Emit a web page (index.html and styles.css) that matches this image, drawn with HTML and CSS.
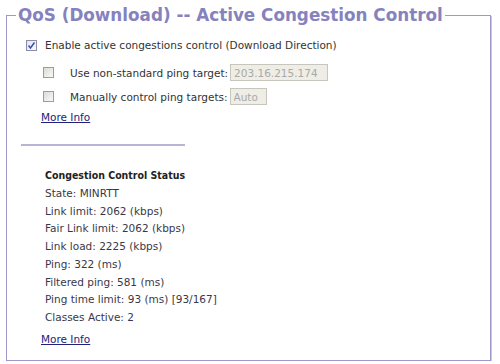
FILE: index.html
```html
<!DOCTYPE html>
<html lang="en">
<head>
  <meta charset="UTF-8">
  <title>QoS (Download)</title>
  <link rel="stylesheet" href="styles.css">
</head>
<body>
  <fieldset class="panel">
    <legend>QoS (Download) -- Active Congestion Control</legend>

    <div class="opt main">
      <span class="cb checked">
        <svg width="9" height="9" viewBox="0 0 9 9"><polyline points="1.5,4.5 3.5,7 7.5,1.5" fill="none" stroke="#3d52b8" stroke-width="1.6"/></svg>
      </span>
      <span>Enable active congestions control (Download Direction)</span>
    </div>

    <div class="opt sub first">
      <span class="cb"></span>
      <span class="lbl">Use non-standard ping target:</span>
      <input class="field ip" type="text" value="203.16.215.174" disabled>
    </div>
    <div class="opt sub">
      <span class="cb"></span>
      <span class="lbl">Manually control ping targets:</span>
      <input class="field auto" type="text" value="Auto" disabled>
    </div>

    <a class="more" href="#">More Info</a>

    <hr class="divider">

    <div class="status">
      <div class="status-title">Congestion Control Status</div>
      <div>State: MINRTT</div>
      <div>Link limit: 2062 (kbps)</div>
      <div>Fair Link limit: 2062 (kbps)</div>
      <div>Link load: 2225 (kbps)</div>
      <div>Ping: 322 (ms)</div>
      <div>Filtered ping: 581 (ms)</div>
      <div>Ping time limit: 93 (ms) [93/167]</div>
      <div>Classes Active: 2</div>
    </div>

    <a class="more last" href="#">More Info</a>
  </fieldset>
</body>
</html>
```

FILE: styles.css
```css
body {
  margin: 0;
  background: #fff;
  font-family: "DejaVu Sans", Verdana, sans-serif;
  font-size: 10.5px;
  color: #333;
}

.panel {
  width: 485px;
  margin: 5px 0 0 6px;
  padding: 10px 0 14px 14px;
  border: 1px solid #9c98cc;
  box-shadow: 1px 1px 0 #cbc8e2;
  box-sizing: border-box;
}

.panel legend {
  margin-left: -5px;
  padding: 0 2px;
  font-size: 16.8px;
  font-weight: bold;
  line-height: 21px;
  color: #8582be;
}

.opt {
  display: flex;
  align-items: center;
}

.opt.main {
  height: 18px;
  padding-left: 5px;
}

.opt.sub {
  height: 19px;
  padding-left: 22px;
  margin-top: 5px;
}

.opt.sub.first {
  margin-top: 9px;
}

.cb {
  display: inline-flex;
  align-items: center;
  justify-content: center;
  width: 11px;
  height: 11px;
  border: 1px solid #9c9c9c;
  background: linear-gradient(135deg, #dcdcd6, #f8f8f6);
  box-sizing: border-box;
  margin-right: 8px;
}

.cb.checked {
  border-color: #8c8ca8;
  background: linear-gradient(135deg, #e4e4ec, #fafafc);
}

.opt.sub .cb {
  margin-right: 16px;
}

.lbl {
  margin-right: 2px;
}

.field {
  height: 17px;
  padding: 0 3px;
  border: 1px solid #c6c6bc;
  background: #efeee6;
  color: #a9a9a9;
  font-family: inherit;
  font-size: 10.5px;
  box-sizing: border-box;
}

.field.ip {
  width: 98px;
}

.field.auto {
  width: 37px;
}

.more {
  display: block;
  width: max-content;
  margin: 4px 0 0 20px;
  line-height: 14px;
  color: #22227a;
}

.more.last {
  margin-top: 5px;
}

.divider {
  width: 164px;
  height: 2px;
  margin: 20px 0 0 0;
  border: none;
  background: #b8b4d8;
}

.status {
  margin: 21px 0 0 24px;
  line-height: 17.75px;
  color: #3a3848;
}

.status-title {
  font-family: "DejaVu Sans Condensed", "DejaVu Sans", sans-serif;
  font-stretch: condensed;
  font-weight: bold;
  color: #222;
}
```
